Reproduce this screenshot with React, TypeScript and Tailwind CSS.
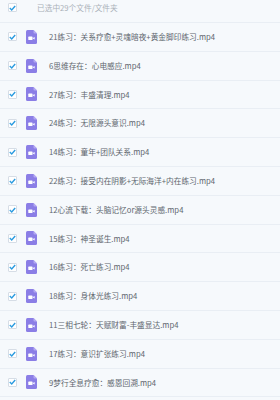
import React from "react";

const files = [
  "21练习：关系疗愈+灵魂暗夜+黄金脚印练习.mp4",
  "6思维存在：心电感应.mp4",
  "27练习：丰盛清理.mp4",
  "24练习：无限源头意识.mp4",
  "14练习：童年+团队关系.mp4",
  "22练习：接受内在阴影+无际海洋+内在练习.mp4",
  "12心流下载：头脑记忆or源头灵感.mp4",
  "15练习：神圣诞生.mp4",
  "16练习：死亡练习.mp4",
  "18练习：身体光练习.mp4",
  "11三相七轮：天赋财富-丰盛显达.mp4",
  "17练习：意识扩张练习.mp4",
  "9梦行全息疗愈：感恩回溯.mp4",
];

function Check() {
  return (
    <div className="w-[9px] h-[9px] shrink-0 border border-[#d6dde6] bg-white rounded-[1px] flex items-center justify-center">
      <svg width="7" height="6" viewBox="0 0 7 6">
        <path d="M0.8 3.1 L2.7 4.9 L6.2 1" fill="none" stroke="#2a9be0" strokeWidth="1.4" />
      </svg>
    </div>
  );
}

function VideoIcon() {
  return (
    <svg width="11" height="14" viewBox="0 0 11 14" className="shrink-0">
      <path d="M1.5 0 H7.5 L11 3.5 V12.5 Q11 14 9.5 14 H1.5 Q0 14 0 12.5 V1.5 Q0 0 1.5 0 Z" fill="#8b7ee6" />
      <path d="M7.5 0 V2.5 Q7.5 3.5 8.5 3.5 H11 Z" fill="#b3a9f2" />
      <rect x="2.3" y="6.6" width="4.2" height="3.4" rx="0.6" fill="white" />
      <path d="M6.5 8.3 L8.6 7 V9.6 Z" fill="white" />
    </svg>
  );
}

export default function App() {
  return (
    <div
      className="w-[280px] h-[400px] overflow-hidden bg-[#f6f9fc]"
      style={{ fontFamily: '"Noto Sans CJK SC", "Noto Sans", sans-serif' }}
    >
      <div className="h-[23px] flex items-center pl-[8px] pb-[7px] border-b border-[#e9eef4]">
        <Check />
        <span className="ml-[20px] text-[7.7px] text-[#aab1b9] leading-none whitespace-nowrap">已选中29个文件/文件夹</span>
      </div>
      {files.map((f) => (
        <div
          key={f}
          className="h-[28.8px] flex items-center pl-[8px] border-b border-[#e9eef4]"
        >
          <Check />
          <div className="ml-[9px]">
            <VideoIcon />
          </div>
          <span className="ml-[12px] text-[7.7px] text-[#60666e] leading-none whitespace-nowrap">{f}</span>
        </div>
      ))}
    </div>
  );
}
